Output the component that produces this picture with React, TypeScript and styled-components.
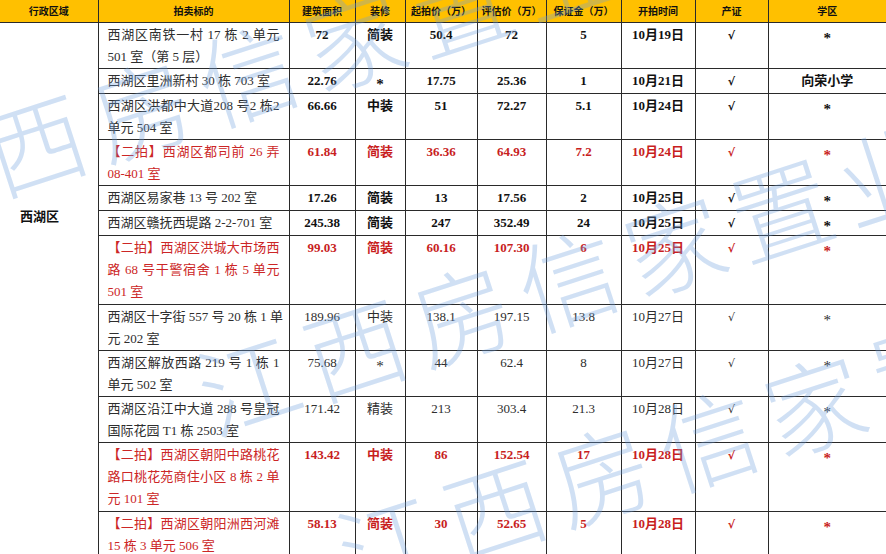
import React from 'react';
import styled, { createGlobalStyle } from 'styled-components';

const Global = createGlobalStyle`
  html, body { margin: 0; padding: 0; background: #fff; }
  body { font-family: "Liberation Serif", "Noto Sans CJK SC", serif; }
`;

const LINE = '#2a2a2a';
const RED = '#c81e1e';

type Tone = 'bold' | 'red' | 'plain';

const Frame = styled.div`
  position: relative;
  width: 886px;
  height: 554px;
  overflow: hidden;
  background: #fff;
`;

const Table = styled.table`
  width: 886px;
  border-collapse: collapse;
  table-layout: fixed;
`;

const HeadRow = styled.tr`
  height: 22px;
`;

const Th = styled.th`
  padding: 0;
  background: #ffc000;
  border: 1px solid ${LINE};
  border-top: none;
  font: 700 10px/1 "Noto Sans CJK SC", sans-serif;
  color: #111;
  text-align: center;
  vertical-align: middle;
  &:first-child { border-left: none; }
  &:last-child { border-right: none; }
`;

const Row = styled.tr<{ $h: number }>`
  height: ${p => p.$h}px;
`;

const RegionCell = styled.td`
  border-right: 1px solid ${LINE};
  padding: 182px 0 0 20px;
  vertical-align: top;
  text-align: left;
  font: 700 13px/22px "Noto Sans CJK SC", sans-serif;
  color: #111;
`;

const AddrCell = styled.td<{ $red: boolean }>`
  border: 1px solid ${LINE};
  padding: 1px 9px 0 9px;
  vertical-align: top;
  font-size: 13px;
  line-height: 22px;
  font-weight: 400;
  color: ${p => (p.$red ? '#cc2626' : '#2e2e2e')};
`;

const AddrLine = styled.div<{ $full: boolean }>`
  white-space: nowrap;
  text-align: ${p => (p.$full ? 'justify' : 'left')};
  text-align-last: ${p => (p.$full ? 'justify' : 'left')};
  text-justify: inter-character;
`;

const Td = styled.td<{ $tone: Tone }>`
  border: 1px solid ${LINE};
  padding: 1px 0 0;
  vertical-align: top;
  text-align: center;
  font-size: 13px;
  line-height: 22px;
  font-weight: ${p => (p.$tone === 'plain' ? 400 : 700)};
  color: ${p => (p.$tone === 'red' ? RED : p.$tone === 'bold' ? '#111' : '#2e2e2e')};
  &:last-child { border-right: none; }
`;

const Star = styled.span`
  display: inline-block;
  font-size: 15px;
  transform: translateY(3px);
`;

const Check = styled.span<{ $heavy: boolean }>`
  font-family: "DejaVu Sans", sans-serif;
  font-size: 11px;
  font-weight: ${p => (p.$heavy ? 700 : 400)};
`;

const Watermark = styled.div`
  position: absolute;
  inset: 0;
  pointer-events: none;
  overflow: hidden;
`;

const WaterLine = styled.div<{ $x: number; $y: number }>`
  position: absolute;
  left: ${p => p.$x}px;
  top: ${p => p.$y}px;
  transform: rotate(-18deg);
  transform-origin: left center;
  font: 300 100px/1 "Noto Sans CJK SC", sans-serif;
  letter-spacing: 12px;
  color: rgba(110, 160, 220, 0.32);
  white-space: nowrap;
`;

type Item = {
  addr: string[];
  cells: string[];
  tone: Tone;
  h: number;
};

const items: Item[] = [
  { addr: ['西湖区南铁一村 17 栋 2 单元', '501 室（第 5 层）'], cells: ['72', '简装', '50.4', '72', '5', '10月19日', '√', '*'], tone: 'bold', h: 46 },
  { addr: ['西湖区里洲新村 30 栋 703 室'], cells: ['22.76', '*', '17.75', '25.36', '1', '10月21日', '√', '向荣小学'], tone: 'bold', h: 24 },
  { addr: ['西湖区洪都中大道208 号2 栋2', '单元 504 室'], cells: ['66.66', '中装', '51', '72.27', '5.1', '10月24日', '√', '*'], tone: 'bold', h: 46 },
  { addr: ['【二拍】西湖区都司前 26 弄', '08-401 室'], cells: ['61.84', '简装', '36.36', '64.93', '7.2', '10月24日', '√', '*'], tone: 'red', h: 46 },
  { addr: ['西湖区易家巷 13 号 202 室'], cells: ['17.26', '简装', '13', '17.56', '2', '10月25日', '√', '*'], tone: 'bold', h: 23 },
  { addr: ['西湖区赣抚西堤路 2-2-701 室'], cells: ['245.38', '简装', '247', '352.49', '24', '10月25日', '√', '*'], tone: 'bold', h: 24 },
  { addr: ['【二拍】西湖区洪城大市场西', '路 68 号干警宿舍 1 栋 5 单元', '501 室'], cells: ['99.03', '简装', '60.16', '107.30', '6', '10月25日', '√', '*'], tone: 'red', h: 69 },
  { addr: ['西湖区十字街 557 号 20 栋 1 单', '元 202 室'], cells: ['189.96', '中装', '138.1', '197.15', '13.8', '10月27日', '√', '*'], tone: 'plain', h: 46 },
  { addr: ['西湖区解放西路 219 号 1 栋 1', '单元 502 室'], cells: ['75.68', '*', '44', '62.4', '8', '10月27日', '√', '*'], tone: 'plain', h: 46 },
  { addr: ['西湖区沿江中大道 288 号皇冠', '国际花园 T1 栋 2503 室'], cells: ['171.42', '精装', '213', '303.4', '21.3', '10月28日', '√', '*'], tone: 'plain', h: 46 },
  { addr: ['【二拍】西湖区朝阳中路桃花', '路口桃花苑商住小区 8 栋 2 单', '元 101 室'], cells: ['143.42', '中装', '86', '152.54', '17', '10月28日', '√', '*'], tone: 'red', h: 69 },
  { addr: ['【二拍】西湖区朝阳洲西河滩', '15 栋 3 单元 506 室'], cells: ['58.13', '简装', '30', '52.65', '5', '10月28日', '√', '*'], tone: 'red', h: 47 },
];

const widths = [98, 191, 66, 50, 72, 69, 75, 74, 73, 118];
const heads = ['行政区域', '拍卖标的', '建筑面积', '装修', '起拍价（万）', '评估价（万）', '保证金（万）', '开拍时间', '产证', '学区'];

const renderCell = (v: string, tone: Tone) => {
  if (v === '*') return <Star>*</Star>;
  if (v === '√') return <Check $heavy={tone !== 'plain'}>√</Check>;
  return v;
};

const marks = [
  { x: -120, y: 140 },
  { x: 200, y: 345 },
  { x: 340, y: 505 },
];

export default function App() {
  return (
    <Frame>
      <Global />
      <Table>
        <colgroup>
          {widths.map((w, i) => (
            <col key={i} style={{ width: w }} />
          ))}
        </colgroup>
        <thead>
          <HeadRow>
            {heads.map(h => (
              <Th key={h}>{h}</Th>
            ))}
          </HeadRow>
        </thead>
        <tbody>
          {items.map((it, i) => (
            <Row key={i} $h={it.h}>
              {i === 0 && <RegionCell rowSpan={items.length}>西湖区</RegionCell>}
              <AddrCell $red={it.tone === 'red'}>
                {it.addr.map((l, j) => (
                  <AddrLine key={j} $full={j < it.addr.length - 1}>
                    {l}
                  </AddrLine>
                ))}
              </AddrCell>
              {it.cells.map((c, j) => (
                <Td key={j} $tone={it.tone}>
                  {renderCell(c, it.tone)}
                </Td>
              ))}
            </Row>
          ))}
        </tbody>
      </Table>
      <Watermark aria-hidden="true">
        {marks.map((m, i) => (
          <WaterLine key={i} $x={m.x} $y={m.y}>
            江西房信家置业
          </WaterLine>
        ))}
      </Watermark>
    </Frame>
  );
}
